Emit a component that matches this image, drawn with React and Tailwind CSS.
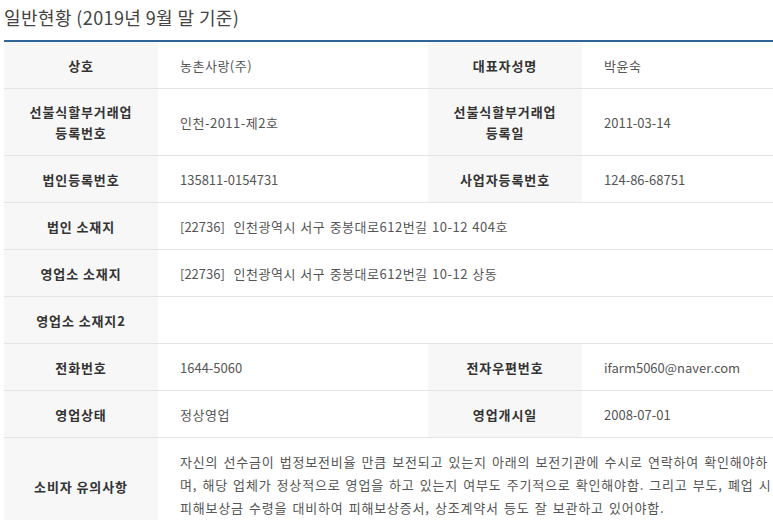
import React from "react";

const font = { fontFamily: '"Noto Sans CJK KR", "Noto Sans", sans-serif' };

function Label({ children, w = "w-[154px]" }) {
  return (
    <div className={`${w} shrink-0 bg-[#f7f7f7] flex items-center justify-center text-center font-bold text-[13px] leading-[21px] text-[#333] tracking-[0.9px]`}>
      <div>{children}</div>
    </div>
  );
}

function Value({ children, w }) {
  return (
    <div className={`${w} shrink-0 flex items-center pl-[22px] text-[13px] leading-[21px] text-[#555]`}>
      {children}
    </div>
  );
}

function K({ children }) {
  return <span className="tracking-[0.5px] [word-spacing:1px]">{children}</span>;
}

function Row({ h, children }) {
  return <div className={`flex ${h} border-b border-[#e4e4e4]`}>{children}</div>;
}

export default function App() {
  return (
    <div className="w-[773px] h-[520px] overflow-hidden bg-white" style={font}>
      <div className="pl-[4px] pt-[4px] h-[40px] text-[18px] leading-[26px] text-[#444] tracking-[0.4px]">
        일반현황 (2019년 9월 말 기준)
      </div>
      <div className="ml-[4px] w-[769px] border-t-[2px] border-[#2f6596]">
        <Row h="h-[47px]">
          <Label>상호</Label>
          <Value w="w-[270px]"><K>농촌사랑(주)</K></Value>
          <Label>대표자성명</Label>
          <Value w="w-[191px]"><K>박윤숙</K></Value>
        </Row>
        <Row h="h-[67px]">
          <Label>
            선불식할부거래업
            <br />
            등록번호
          </Label>
          <Value w="w-[270px]"><K>인천-2011-제2호</K></Value>
          <Label>
            선불식할부거래업
            <br />
            등록일
          </Label>
          <Value w="w-[191px]">2011-03-14</Value>
        </Row>
        <Row h="h-[47px]">
          <Label>법인등록번호</Label>
          <Value w="w-[270px]">135811-0154731</Value>
          <Label>사업자등록번호</Label>
          <Value w="w-[191px]">124-86-68751</Value>
        </Row>
        <Row h="h-[47px]">
          <Label>법인 소재지</Label>
          <Value w="w-[615px]">
            <span className="whitespace-pre">[22736]   <K>인천광역시 서구 중봉대로612번길 10-12 404호</K></span>
          </Value>
        </Row>
        <Row h="h-[47px]">
          <Label>영업소 소재지</Label>
          <Value w="w-[615px]">
            <span className="whitespace-pre">[22736]   <K>인천광역시 서구 중봉대로612번길 10-12 상동</K></span>
          </Value>
        </Row>
        <Row h="h-[47px]">
          <Label>영업소 소재지2</Label>
          <Value w="w-[615px]"></Value>
        </Row>
        <Row h="h-[47px]">
          <Label>전화번호</Label>
          <Value w="w-[270px]">1644-5060</Value>
          <Label>전자우편번호</Label>
          <Value w="w-[191px]">ifarm5060@naver.com</Value>
        </Row>
        <Row h="h-[47px]">
          <Label>영업상태</Label>
          <Value w="w-[270px]"><K>정상영업</K></Value>
          <Label>영업개시일</Label>
          <Value w="w-[191px]">2008-07-01</Value>
        </Row>
        <Row h="h-[98px]">
          <Label>소비자 유의사항</Label>
          <div className="w-[615px] shrink-0 flex items-center pl-[22px] text-[13px] leading-[23px] text-[#555] whitespace-nowrap tracking-[0.8px] [word-spacing:1.5px]">
            <div className="-mt-[4px]">
              자신의 선수금이 법정보전비율 만큼 보전되고 있는지 아래의 보전기관에 수시로 연락하여 확인해야하
              <br />
              며, 해당 업체가 정상적으로 영업을 하고 있는지 여부도 주기적으로 확인해야함. 그리고 부도, 폐업 시
              <br />
              피해보상금 수령을 대비하여 피해보상증서, 상조계약서 등도 잘 보관하고 있어야함.
            </div>
          </div>
        </Row>
      </div>
    </div>
  );
}
